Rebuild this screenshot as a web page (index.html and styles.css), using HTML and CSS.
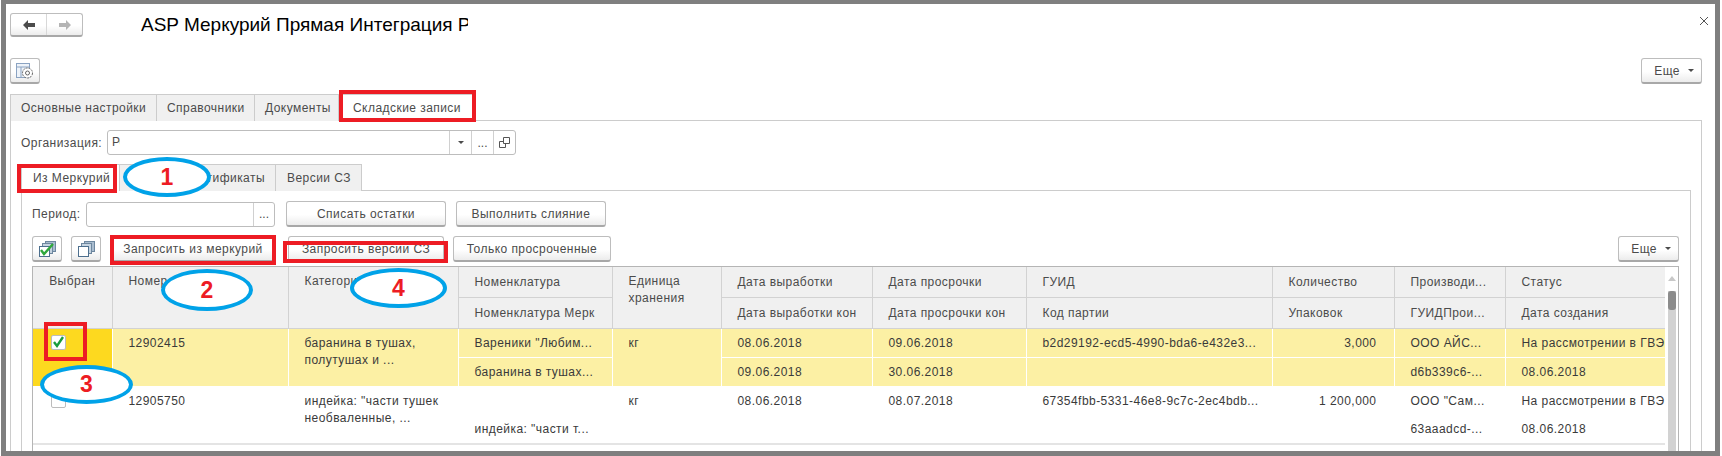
FILE: index.html
```html
<!DOCTYPE html>
<html lang="ru">
<head>
    <meta charset="UTF-8">
    <title>ASP Меркурий Прямая Интеграция</title>
    <link rel="stylesheet" href="styles.css">
</head>
<body>
    <div class="window">
        <div class="top-bar">
            <div class="btn nav-btn">
                <span class="nav-half">
                    <svg width="16" height="12" viewBox="0 0 16 12"><path d="M7 1 2 6l5 5V8h7V4H7z" fill="#4b4b4b"/></svg>
                </span>
                <span class="nav-half">
                    <svg width="16" height="12" viewBox="0 0 16 12"><path d="M9 1l5 5-5 5V8H2V4h7z" fill="#b4b4b4"/></svg>
                </span>
            </div>
            <div class="title">ASP Меркурий Прямая Интеграция Р</div>
            <div class="close">
                <svg width="12" height="12" viewBox="0 0 12 12"><path d="M2 2l8 8M10 2l-8 8" stroke="#555" stroke-width="1" fill="none"/></svg>
            </div>
        </div>

        <div class="command-bar">
            <div class="btn icon-btn">
                <svg width="20" height="18" viewBox="0 0 20 18">
                    <rect x="1.5" y="1.5" width="13" height="14" fill="#eef3f9" stroke="#8ba3c2"/>
                    <path d="M1.5 5h13M6 5v10" stroke="#8ba3c2"/>
                    <circle cx="12.5" cy="11" r="5" fill="#fff" stroke="#666" stroke-dasharray="2 1"/>
                    <circle cx="12.5" cy="11" r="2" fill="#fff" stroke="#666"/>
                </svg>
            </div>
            <div class="btn more-btn">Еще <span class="caret"></span></div>
        </div>

        <div class="tabs">
            <div class="tab">Основные настройки</div>
            <div class="tab">Справочники</div>
            <div class="tab tab-docs">Документы</div>
            <div class="tab tab-active tab-stock">Складские записи</div>
        </div>

        <div class="panel">
            <div class="form-row org-row">
                <span class="label">Организация:</span>
                <div class="input org-input">
                    <span class="input-text"><span class="input-clip">Рога</span></span>
                    <span class="input-cell"><span class="caret"></span></span>
                    <span class="input-cell">...</span>
                    <span class="input-cell">
                        <svg width="11" height="11" viewBox="0 0 11 11"><path d="M4.5.5h6v6h-6zM4.5 4.5h-4v6h6v-4" fill="none" stroke="#555"/></svg>
                    </span>
                </div>
            </div>

            <div class="tabs sub-tabs">
                <div class="tab tab-active tab-mercury">Из Меркурий</div>
                <div class="tab tab-cert">Вет. сертификаты</div>
                <div class="tab tab-versions">Версии СЗ</div>
            </div>

            <div class="sub-panel">
                <div class="form-row period-row">
                    <span class="label">Период:</span>
                    <div class="input period-input">
                        <span class="input-text"></span>
                        <span class="input-cell period-cell">...</span>
                    </div>
                    <div class="btn text-btn write-off">Списать остатки</div>
                    <div class="btn text-btn merge">Выполнить слияние</div>
                </div>

                <div class="form-row tools-row">
                    <div class="btn icon-btn">
                        <svg width="20" height="18" viewBox="0 0 20 18">
                            <rect x="8.5" y="1.5" width="10" height="10" fill="#a9bccf" stroke="#6d879f"/>
                            <rect x="5.5" y="3.5" width="10" height="10" fill="#c5d3e0" stroke="#6d879f"/>
                            <rect x="2.5" y="6.5" width="10" height="10" fill="#fff" stroke="#4d6f8e"/>
                            <path d="M4 10l3 4 9-10" fill="none" stroke="#2fa83c" stroke-width="2.4"/>
                        </svg>
                    </div>
                    <div class="btn icon-btn">
                        <svg width="20" height="18" viewBox="0 0 20 18">
                            <rect x="8.5" y="1.5" width="10" height="10" fill="#a9bccf" stroke="#6d879f"/>
                            <rect x="5.5" y="3.5" width="10" height="10" fill="#c5d3e0" stroke="#6d879f"/>
                            <rect x="2.5" y="6.5" width="10" height="10" fill="#fff" stroke="#4d6f8e"/>
                        </svg>
                    </div>
                    <div class="btn text-btn ask-mercury">Запросить из меркурий</div>
                    <div class="btn text-btn ask-versions">Запросить версии СЗ</div>
                    <div class="btn text-btn only-expired">Только просроченные</div>
                    <div class="btn more-btn more-table">Еще <span class="caret"></span></div>
                </div>

                <div class="grid-wrap">
                    <table class="grid">
                        <colgroup>
                            <col class="c-check"><col class="c-num"><col class="c-cat"><col class="c-nom"><col class="c-unit">
                            <col class="c-date"><col class="c-date2"><col class="c-guid"><col class="c-qty"><col class="c-prod"><col class="c-status">
                        </colgroup>
                        <thead>
                            <tr>
                                <th rowspan="2" class="center">Выбран</th>
                                <th rowspan="2">Номер</th>
                                <th rowspan="2">Категория</th>
                                <th>Номенклатура</th>
                                <th rowspan="2">Единица<br>хранения</th>
                                <th>Дата выработки</th>
                                <th>Дата просрочки</th>
                                <th>ГУИД</th>
                                <th>Количество</th>
                                <th>Производи...</th>
                                <th>Статус</th>
                            </tr>
                            <tr>
                                <th>Номенклатура Мерк</th>
                                <th>Дата выработки кон</th>
                                <th>Дата просрочки кон</th>
                                <th>Код партии</th>
                                <th>Упаковок</th>
                                <th>ГУИДПрои...</th>
                                <th>Дата создания</th>
                            </tr>
                        </thead>
                        <tbody>
                            <tr class="selected">
                                <td rowspan="2" class="check-cell"><span class="checkbox">
                                    <svg width="15" height="15" viewBox="0 0 15 15"><path d="M3 7l3 4 6-9" fill="none" stroke="#1a9c3e" stroke-width="2.4"/></svg>
                                </span></td>
                                <td rowspan="2">12902415</td>
                                <td rowspan="2">баранина в тушах,<br>полутушах и ...</td>
                                <td>Вареники "Любим...</td>
                                <td rowspan="2">кг</td>
                                <td>08.06.2018</td>
                                <td>09.06.2018</td>
                                <td>b2d29192-ecd5-4990-bda6-e432e3...</td>
                                <td class="num">3,000</td>
                                <td>ООО АЙС...</td>
                                <td>На рассмотрении в ГВЭ</td>
                            </tr>
                            <tr class="selected">
                                <td>баранина в тушах...</td>
                                <td>09.06.2018</td>
                                <td>30.06.2018</td>
                                <td></td>
                                <td></td>
                                <td>d6b339c6-...</td>
                                <td>08.06.2018</td>
                            </tr>
                            <tr class="plain">
                                <td rowspan="2" class="check-cell"><span class="checkbox"></span></td>
                                <td rowspan="2">12905750</td>
                                <td rowspan="2">индейка: "части тушек<br>необваленные, ...</td>
                                <td></td>
                                <td rowspan="2">кг</td>
                                <td>08.06.2018</td>
                                <td>08.07.2018</td>
                                <td>67354fbb-5331-46e8-9c7c-2ec4bdb...</td>
                                <td class="num">1 200,000</td>
                                <td>ООО "Сам...</td>
                                <td>На рассмотрении в ГВЭ</td>
                            </tr>
                            <tr class="plain">
                                <td>индейка: "части т...</td>
                                <td></td>
                                <td></td>
                                <td></td>
                                <td></td>
                                <td>63aaadcd-...</td>
                                <td>08.06.2018</td>
                            </tr>
                        </tbody>
                    </table>
                    <div class="scrollbar">
                        <span class="scroll-up"></span>
                        <span class="scroll-thumb"></span>
                    </div>
                </div>
            </div>
        </div>

        <!-- пометки поверх скриншота -->
        <div class="mark box-stock"></div>
        <div class="mark box-mercury"></div>
        <div class="mark box-ask"></div>
        <div class="mark box-versions"></div>
        <div class="mark box-check"></div>
        <div class="oval oval-1">1</div>
        <div class="oval oval-2">2</div>
        <div class="oval oval-3">3</div>
        <div class="oval oval-4">4</div>
    </div>
</body>
</html>
```

FILE: styles.css
```css
html, body {
    margin: 0;
    height: 456px;
    overflow: hidden;
    background-color: #fff;
}
body {
    font-family: "Liberation Sans", Arial, sans-serif;
    font-size: 12px;
    color: #4b4b4b;
    padding: 0 2px 0 1px;
    width: 1722px;
    box-sizing: border-box;
}
.window {
    position: relative;
    box-sizing: border-box;
    height: 456px;
    padding: 0 13px 0 4px;
    border: 5px solid #7f7f7f;
    border-top-width: 4px;
    overflow: hidden;
    background-color: #fff;
}
.btn {
    box-sizing: border-box;
    display: flex;
    align-items: center;
    justify-content: center;
    height: 26px;
    border: 1px solid #bdbdbd;
    border-bottom: 2px solid #a8a8a8;
    border-radius: 3px;
    background: linear-gradient(#fff 55%, #ececec);
    letter-spacing: 0.45px;
}
.top-bar {
    display: flex;
    align-items: center;
    height: 24px;
    padding-top: 9px;
}
.nav-btn {
    width: 73px;
    height: 24px;
    flex: none;
}
.nav-half {
    flex: 1;
    height: 100%;
    display: flex;
    align-items: center;
    justify-content: center;
}
.nav-half + .nav-half {
    border-left: 1px solid #d8d8d8;
}
.title {
    width: 327px;
    margin-left: 58px;
    overflow: hidden;
    white-space: nowrap;
    font-size: 19px;
    color: #000;
}
.close {
    margin-left: auto;
    margin-right: -8px;
    margin-top: -8px;
    display: flex;
}
.command-bar {
    display: flex;
    justify-content: space-between;
    margin-top: 21px;
}
.icon-btn {
    width: 30px;
    flex: none;
}
.more-btn {
    width: 61px;
    flex: none;
    justify-content: flex-end;
    padding-right: 7px;
    gap: 8px;
}
.caret {
    width: 0;
    height: 0;
    border: 3px solid transparent;
    border-top: 3px solid #4b4b4b;
    border-bottom: 0;
}
.tabs {
    display: flex;
    height: 27px;
    margin-top: 10px;
}
.tab {
    box-sizing: border-box;
    display: flex;
    align-items: center;
    padding: 0 10px;
    border: 1px solid #ccc;
    border-left: 0;
    border-bottom: 0;
    background-color: #f0f0f0;
    letter-spacing: 0.45px;
    white-space: nowrap;
}
.tab:first-child {
    border-left: 1px solid #ccc;
}
.tab:nth-child(1) { width: 147px; }
.tab:nth-child(2) { width: 98px; }
.tab-docs { width: 84px; }
.tab-active {
    background-color: #fff;
}
.tab-stock { width: 137px; padding-left: 14px; }
.panel {
    box-sizing: border-box;
    height: 400px;
    margin-top: -1px;
    padding: 9px 10px 0 10px;
    border: 1px solid #ccc;
    border-bottom: 0;
}
.form-row {
    display: flex;
    align-items: center;
}
.label {
    letter-spacing: 0.45px;
}
.org-row .label {
    width: 86px;
}
.input {
    box-sizing: border-box;
    display: flex;
    height: 25px;
    border: 1px solid #bdbdbd;
    border-radius: 3px;
    background-color: #fff;
}
.org-input {
    width: 409px;
}
.input-text {
    flex: 1;
    padding-left: 4px;
    line-height: 23px;
}
.input-clip {
    display: block;
    width: 8px;
    overflow: hidden;
    white-space: nowrap;
}
.input-cell {
    width: 21px;
    display: flex;
    align-items: center;
    justify-content: center;
    border-left: 1px solid #d0d0d0;
}
.sub-tabs {
    margin-top: 9px;
}
.sub-tabs .tab-mercury { width: 99px; padding-left: 11px; }
.sub-tabs .tab-cert { width: 156px; justify-content: flex-end; }
.sub-tabs .tab-versions { width: 86px; padding-left: 11px; }
.sub-panel {
    height: 300px;
    margin-top: -1px;
    padding: 10px 11px 0 10px;
    border: 1px solid #ccc;
    border-bottom: 0;
}
.period-row .label {
    width: 54px;
}
.period-input {
    width: 189px;
}
.period-cell {
    width: 20px;
}
.text-btn {
    flex: none;
    margin-left: 10px;
}
.write-off { width: 160px; margin-left: 11px; }
.merge { width: 150px; }
.tools-row {
    margin-top: 9px;
    gap: 9px;
}
.tools-row .text-btn {
    margin-left: 0;
}
.tools-row .ask-versions { margin-left: 3px; }
.ask-mercury { width: 166px; }
.ask-versions { width: 156px; }
.only-expired { width: 158px; }
.more-table { margin-left: auto; }
.grid-wrap {
    display: flex;
    height: 200px;
    margin-top: 4px;
    border: 1px solid #b5b5b5;
    border-bottom: 0;
    overflow: hidden;
}
.grid {
    width: 1632px;
    table-layout: fixed;
    border-collapse: collapse;
    flex: none;
    align-self: flex-start;
    letter-spacing: 0.45px;
}
.c-check { width: 79px; }
.c-num { width: 176px; }
.c-cat { width: 170px; }
.c-nom { width: 154px; }
.c-unit { width: 109px; }
.c-date { width: 151px; }
.c-date2 { width: 154px; }
.c-guid { width: 246px; }
.c-qty { width: 122px; }
.c-prod { width: 111px; }
.c-status { width: 160px; }
.grid th, .grid td {
    padding: 0 0 0 16px;
    overflow: hidden;
    white-space: nowrap;
    text-align: left;
    font-weight: normal;
    height: 28px;
    line-height: 17px;
    color: #3a3a3a;
    border: 1px solid #fff;
}
.grid tr > :last-child {
    border-right: 0;
}
.grid th {
    background-color: #f0f0f0;
    border-color: #d2d2d2;
    color: #4b4b4b;
    height: 30px;
}
.grid thead tr:first-child th {
    border-top: 0;
}
.grid th:first-child, .grid td:first-child {
    border-left: 0;
}
.grid th[rowspan], .grid td[rowspan] {
    vertical-align: top;
    padding-top: 6px;
}
.grid th.center {
    text-align: center;
    padding-left: 0;
}
.grid td.num {
    text-align: right;
    padding-right: 17px;
}
.selected td {
    background-color: #fcf0a4;
}
.grid .selected .check-cell {
    background-color: #fdd91f;
}
.grid .plain:last-child td {
    height: 27px;
}
.grid .plain:last-child td, .grid .plain td[rowspan] {
    border-bottom: 2px solid #e4e4e4;
}
.grid .check-cell {
    padding-left: 18px;
}
.checkbox {
    display: block;
    box-sizing: border-box;
    width: 15px;
    height: 15px;
    border: 1px solid #bcbcbc;
    border-radius: 2px;
    background-color: #fff;
}
.checkbox svg {
    display: block;
    margin: -1px;
}
.scrollbar {
    flex: 1;
    position: relative;
    background-color: #fff;
}
.scrollbar::after {
    content: "";
    position: absolute;
    left: 3px;
    top: 24px;
    bottom: 0;
    width: 8px;
    background-color: #d2d2d2;
}
.scroll-up {
    position: absolute;
    left: 3px;
    top: 9px;
    border: 4px solid transparent;
    border-bottom: 5px solid #c8c8c8;
    border-top: 0;
}
.scroll-thumb {
    position: absolute;
    z-index: 1;
    left: 3px;
    top: 24px;
    width: 8px;
    height: 19px;
    border-radius: 3px;
    background-color: #8c8c8c;
}

/* красные рамки и голубые овалы */
.mark {
    position: absolute;
    box-sizing: border-box;
    border: 4px solid #ed1c24;
}
.box-stock { left: 333px; top: 86px; width: 137px; height: 32px; }
.box-mercury { left: 11px; top: 160px; width: 100px; height: 29px; }
.box-ask { left: 104px; top: 231px; width: 166px; height: 30px; }
.box-versions { left: 277px; top: 237px; width: 165px; height: 22px; }
.box-check { left: 38px; top: 318px; width: 43px; height: 39px; }
.oval {
    position: absolute;
    box-sizing: border-box;
    display: flex;
    align-items: center;
    justify-content: center;
    border: 4px solid #00a2e8;
    border-radius: 50%;
    background-color: #fff;
    color: #ed1c24;
    font-size: 23px;
    font-weight: bold;
}
.oval-1 { left: 117px; top: 153px; width: 88px; height: 40px; }
.oval-2 { left: 155px; top: 265px; width: 92px; height: 42px; }
.oval-3 { left: 34px; top: 361px; width: 93px; height: 39px; }
.oval-4 { left: 344px; top: 264px; width: 97px; height: 40px; }
```
